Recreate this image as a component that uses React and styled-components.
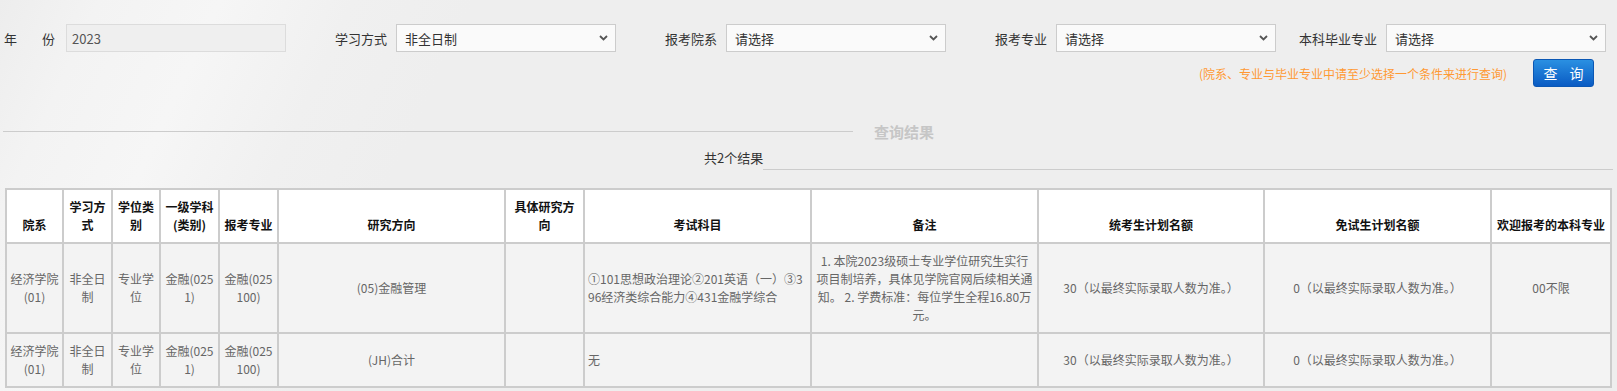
import React from 'react'
import styled, {createGlobalStyle} from 'styled-components'

const GlobalStyle = createGlobalStyle`
  html, body {
    margin: 0;
    padding: 0;
  }
  body {
    background: #eeeeee;
    font-family: "Noto Sans CJK SC", "Noto Sans", sans-serif;
    color: #333;
  }
`

const Page = styled.div`
  width: 1617px;
  min-height: 391px;
  padding-bottom: 4px;
  background: linear-gradient(
    115deg,
    #ededed 0px,
    #f3f3f3 90px,
    #f6f6f6 200px,
    #f0f0f0 320px,
    #eeeeee 430px
  );
`

const FilterRow = styled.div`
  display: flex;
  padding-top: 24px;
`

const Field = styled.div`
  width: 330px;
  flex-shrink: 0;
  display: flex;
  align-items: center;
`

const Label = styled.label`
  width: 57px;
  margin-right: 9px;
  display: flex;
  justify-content: flex-end;
  white-space: nowrap;
  font-size: 13px;
  color: #333;
`

const YearLabel = styled.label`
  width: 51px;
  margin: 0 11px 0 4px;
  display: flex;
  justify-content: space-between;
  font-size: 13px;
  color: #333;
`

const YearInput = styled.div`
  box-sizing: border-box;
  width: 220px;
  height: 28px;
  padding: 0 5px;
  display: flex;
  align-items: center;
  border: 1px solid #dcdcdc;
  background: #efefef;
  font-size: 13px;
  color: #555;
`

const Select = styled.div`
  box-sizing: border-box;
  width: 220px;
  height: 28px;
  padding: 0 7px 0 8px;
  display: flex;
  align-items: center;
  justify-content: space-between;
  border: 1px solid #cccccc;
  background: #fafafa;
  font-size: 13px;
  color: #333;
`

const ActionRow = styled.div`
  display: flex;
  justify-content: flex-end;
  align-items: center;
  margin-top: 7px;
  padding-right: 23px;
`

const Note = styled.span`
  font-size: 12px;
  color: #ff9933;
  margin-right: 26px;
`

const SearchButton = styled.button`
  box-sizing: border-box;
  width: 61px;
  height: 28px;
  display: flex;
  align-items: center;
  justify-content: center;
  gap: 12px;
  padding: 0;
  border: 1px solid #0b57b4;
  border-radius: 3px;
  background: linear-gradient(#2a90e2, #0a5bc3);
  color: #fff;
  font-family: inherit;
  font-size: 14px;
`

const Divider = styled.div`
  display: flex;
  align-items: center;
  height: 20px;
  margin-top: 34px;
`

const DividerLine = styled.div`
  width: 850px;
  margin-left: 3px;
  border-top: 1px solid #cccccc;
`

const DividerTitle = styled.span`
  margin-left: 21px;
  font-size: 15px;
  font-weight: bold;
  color: #c6c6c6;
`

const CountRow = styled.div`
  display: flex;
  height: 22px;
  margin-top: 7px;
  padding-left: 704px;
  padding-right: 4px;
`

const Count = styled.span`
  font-size: 13px;
  line-height: 20px;
  color: #333;
`

const CountLine = styled.div`
  flex: 1;
  border-bottom: 1px solid #cccccc;
`

const Table = styled.table`
  width: 1607px;
  margin: 18px 5px 0;
  border: 1px solid #cccccc;
  border-collapse: separate;
  border-spacing: 0;
  table-layout: fixed;
  font-size: 12px;
  line-height: 18px;
`

const Th = styled.th`
  box-sizing: border-box;
  width: ${props => props.$w}px;
  padding: 8px 3px;
  border: 1px solid #cccccc;
  background: #ffffff;
  color: #111;
  font-weight: bold;
  text-align: center;
  vertical-align: bottom;
  word-break: break-all;
`

const Td = styled.td`
  padding: 8px 3px;
  border: 1px solid #cccccc;
  background: #f3f3f3;
  color: #666;
  text-align: ${props => (props.$left ? 'left' : 'center')};
  vertical-align: middle;
  word-break: break-all;
`

const Chevron = () => (
  <svg width="9" height="6" viewBox="0 0 9 6">
    <path d="M1 1 L4.5 4.5 L8 1" fill="none" stroke="#555" strokeWidth="1.8" />
  </svg>
)

const filters = [
  {label: '学习方式', value: '非全日制'},
  {label: '报考院系', value: '请选择'},
  {label: '报考专业', value: '请选择'},
  {label: '本科毕业专业', value: '请选择'},
]

const columns = [
  {title: '院系', w: 57},
  {title: '学习方式', w: 49},
  {title: '学位类别', w: 48},
  {title: '一级学科(类别)', w: 59},
  {title: '报考专业', w: 59},
  {title: '研究方向', w: 227},
  {title: '具体研究方向', w: 79},
  {title: '考试科目', w: 227},
  {title: '备注', w: 227},
  {title: '统考生计划名额', w: 226},
  {title: '免试生计划名额', w: 227},
  {title: '欢迎报考的本科专业', w: 120},
]

const rows = [
  {
    dept: '经济学院(01)',
    mode: '非全日制',
    degree: '专业学位',
    subject: '金融(0251)',
    major: '金融(025100)',
    direction: '(05)金融管理',
    detail: '',
    exam: '①101思想政治理论②201英语（一）③396经济类综合能力④431金融学综合',
    remark: '1. 本院2023级硕士专业学位研究生实行项目制培养，具体见学院官网后续相关通知。 2. 学费标准：每位学生全程16.80万元。',
    quota: '30（以最终实际录取人数为准。）',
    exempt: '0（以最终实际录取人数为准。）',
    welcome: '00不限',
  },
  {
    dept: '经济学院(01)',
    mode: '非全日制',
    degree: '专业学位',
    subject: '金融(0251)',
    major: '金融(025100)',
    direction: '(JH)合计',
    detail: '',
    exam: '无',
    remark: '',
    quota: '30（以最终实际录取人数为准。）',
    exempt: '0（以最终实际录取人数为准。）',
    welcome: '',
  },
]

export default function App() {
  return (
    <Page>
      <GlobalStyle />
      <FilterRow>
        <Field>
          <YearLabel>
            <span>年</span>
            <span>份</span>
          </YearLabel>
          <YearInput>2023</YearInput>
        </Field>
        {filters.map(f => (
          <Field key={f.label}>
            <Label>{f.label}</Label>
            <Select>
              <span>{f.value}</span>
              <Chevron />
            </Select>
          </Field>
        ))}
      </FilterRow>

      <ActionRow>
        <Note>(院系、专业与毕业专业中请至少选择一个条件来进行查询)</Note>
        <SearchButton>
          <span>查</span>
          <span>询</span>
        </SearchButton>
      </ActionRow>

      <Divider>
        <DividerLine />
        <DividerTitle>查询结果</DividerTitle>
      </Divider>

      <CountRow>
        <Count>共2个结果</Count>
        <CountLine />
      </CountRow>

      <Table>
        <thead>
          <tr>
            {columns.map(c => (
              <Th key={c.title} $w={c.w}>
                {c.title}
              </Th>
            ))}
          </tr>
        </thead>
        <tbody>
          {rows.map((r, i) => (
            <tr key={i}>
              <Td>{r.dept}</Td>
              <Td>{r.mode}</Td>
              <Td>{r.degree}</Td>
              <Td>{r.subject}</Td>
              <Td>{r.major}</Td>
              <Td>{r.direction}</Td>
              <Td>{r.detail}</Td>
              <Td $left>{r.exam}</Td>
              <Td>{r.remark}</Td>
              <Td>{r.quota}</Td>
              <Td>{r.exempt}</Td>
              <Td>{r.welcome}</Td>
            </tr>
          ))}
        </tbody>
      </Table>
    </Page>
  )
}
